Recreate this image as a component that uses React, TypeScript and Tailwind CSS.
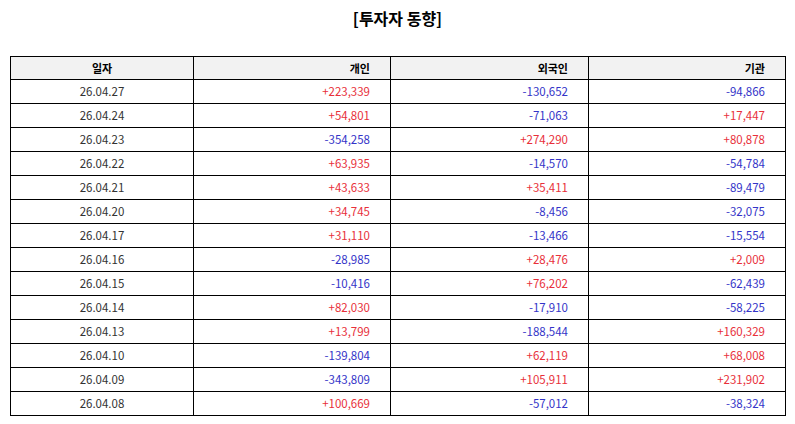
import React from "react";

const rows: [string, string, string, string][] = [
  ["26.04.27", "+223,339", "-130,652", "-94,866"],
  ["26.04.24", "+54,801", "-71,063", "+17,447"],
  ["26.04.23", "-354,258", "+274,290", "+80,878"],
  ["26.04.22", "+63,935", "-14,570", "-54,784"],
  ["26.04.21", "+43,633", "+35,411", "-89,479"],
  ["26.04.20", "+34,745", "-8,456", "-32,075"],
  ["26.04.17", "+31,110", "-13,466", "-15,554"],
  ["26.04.16", "-28,985", "+28,476", "+2,009"],
  ["26.04.15", "-10,416", "+76,202", "-62,439"],
  ["26.04.14", "+82,030", "-17,910", "-58,225"],
  ["26.04.13", "+13,799", "-188,544", "+160,329"],
  ["26.04.10", "-139,804", "+62,119", "+68,008"],
  ["26.04.09", "-343,809", "+105,911", "+231,902"],
  ["26.04.08", "+100,669", "-57,012", "-38,324"],
];

function Num({ v }: { v: string }) {
  const red = v.startsWith("+");
  return (
    <td
      className={`border border-black text-right pr-[20px] ${
        red ? "text-[#e8303a]" : "text-[#3434c8]"
      }`}
    >
      {v}
    </td>
  );
}

export default function App() {
  return (
    <div
      className="w-[795px] h-[424px] bg-white px-[10px] pt-[7px]"
      style={{ fontFamily: '"Noto Sans CJK KR", "Noto Sans", sans-serif' }}
    >
      <h1 className="text-center text-[16px] font-bold leading-[22px] text-black">
        [투자자 동향]
      </h1>
      <table className="mt-[27px] w-[775px] border-collapse table-fixed text-[11.5px] text-[#333]">
        <colgroup>
          <col className="w-[183px]" />
          <col className="w-[197px]" />
          <col className="w-[198px]" />
          <col className="w-[197px]" />
        </colgroup>
        <thead>
          <tr className="h-[23px] bg-[#f2f2f2] font-bold text-black text-[11px]">
            <th className="border border-black text-center">일자</th>
            <th className="border border-black text-right pr-[20px]">개인</th>
            <th className="border border-black text-right pr-[20px]">외국인</th>
            <th className="border border-black text-right pr-[20px]">기관</th>
          </tr>
        </thead>
        <tbody>
          {rows.map((r) => (
            <tr key={r[0]} className="h-[24px]">
              <td className="border border-black text-center">{r[0]}</td>
              <Num v={r[1]} />
              <Num v={r[2]} />
              <Num v={r[3]} />
            </tr>
          ))}
        </tbody>
      </table>
    </div>
  );
}
